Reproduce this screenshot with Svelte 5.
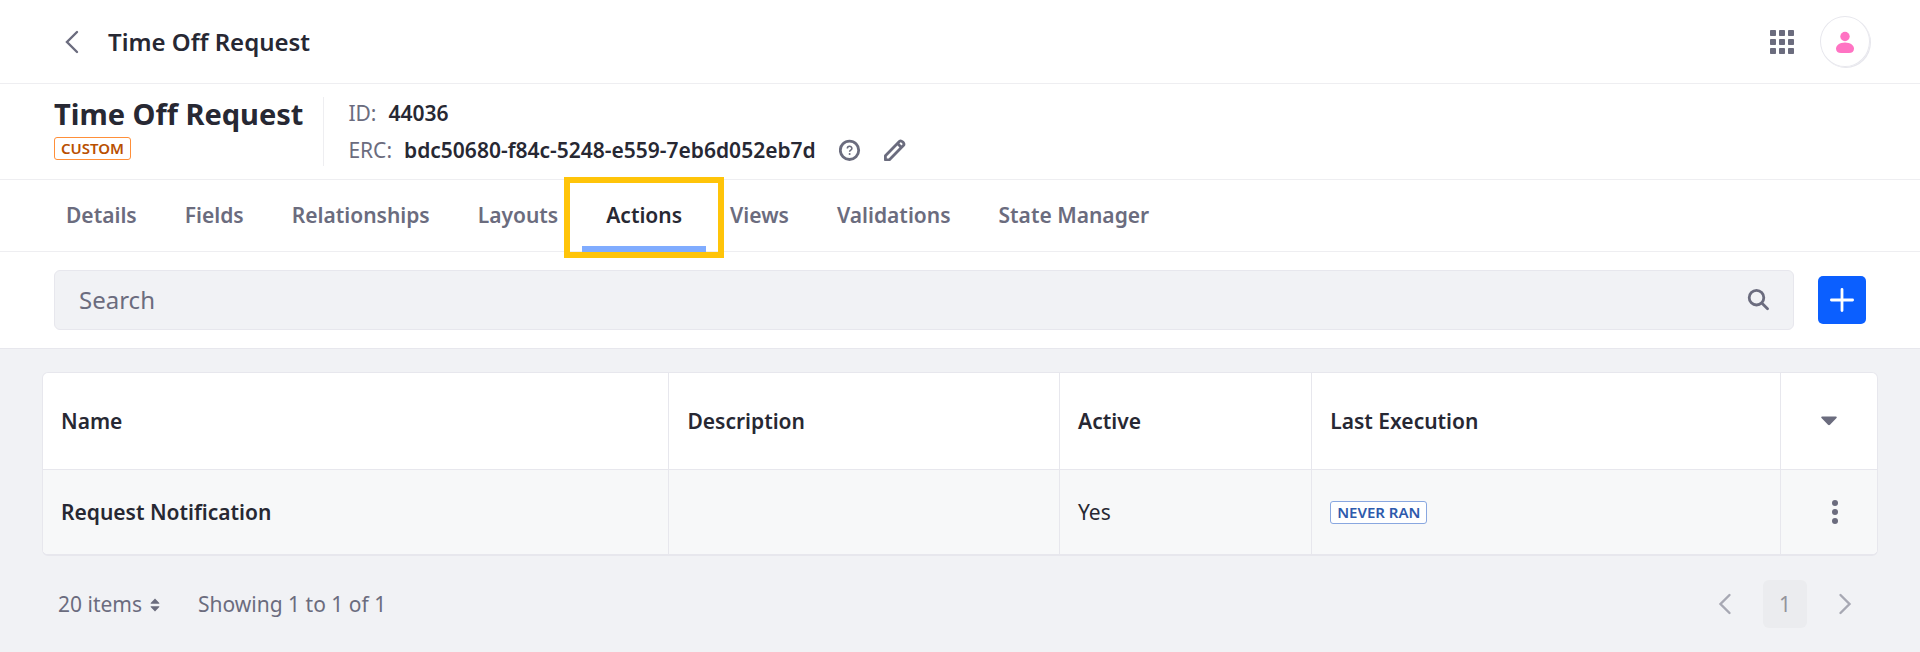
<script>
  const tabs = ['Details', 'Fields', 'Relationships', 'Layouts', 'Actions', 'Views', 'Validations', 'State Manager'];
  const rows = [{ name: 'Request Notification', description: '', active: 'Yes', status: 'Never ran' }];
  const cells = [0, 9, 18];
  let current = $state('Actions');
  let query = $state('');
</script>

<header class="topbar">
  <button class="icon-button" aria-label="Back">
    <svg width="24" height="24" viewBox="0 0 24 24"><path d="M17 2 7 12l10 10" class="line" /></svg>
  </button>
  <span class="page-name">Time Off Request</span>
  <div class="tools">
    <button class="icon-button" aria-label="Applications">
      <svg width="24" height="24" viewBox="0 0 24 24">
        {#each cells as y}{#each cells as x}<rect {x} {y} width="6" height="6" rx="0.8" fill="currentColor" />{/each}{/each}
      </svg>
    </button>
    <button class="avatar" aria-label="User profile">
      <svg width="24" height="24" viewBox="0 0 24 24" fill="#ff73c3">
        <circle cx="12" cy="6.500" r="4.700" />
        <path d="M12 12.500c5.200 0 9 2.800 9 6.100 0 3-2 4.500-5 4.500H8c-3 0-5-1.500-5-4.500 0-3.300 3.800-6.100 9-6.100z" />
      </svg>
    </button>
  </div>
</header>

<section class="summary">
  <div class="identity">
    <h1>Time Off Request</h1>
    <span class="badge custom">Custom</span>
  </div>
  <dl>
    <div><dt>ID:</dt><dd>44036</dd></div>
    <div>
      <dt>ERC:</dt><dd>bdc50680-f84c-5248-e559-7eb6d052eb7d</dd>
      <button class="icon-button help" aria-label="Help">
        <svg width="22" height="22" viewBox="0 0 22 22">
          <circle cx="10.500" cy="11.300" r="9.200" class="line heavy" />
          <path d="M8.300 9.600c0-3 4.600-2.900 4.600-.2 0 1.700-2.300 1.700-2.300 3.300" fill="none" stroke="currentColor" stroke-width="1.500" />
          <circle cx="10.600" cy="14.900" r="1" fill="currentColor" />
        </svg>
      </button>
      <button class="icon-button edit" aria-label="Edit">
        <svg width="22" height="22" viewBox="0 0 22 22">
          <path d="M1.400 20.800v-4.100L15.600 2.300c1.600-1.600 5.600 2.400 4 4L5.400 20.800zM13.600 4.600l3.800 3.800" class="line heavy" stroke-linejoin="round" />
        </svg>
      </button>
    </div>
  </dl>
</section>

<nav class="tabs">
  {#each tabs as tab}
    <button class="tab" class:active={tab === current} onclick={() => (current = tab)}>{tab}</button>
  {/each}
</nav>

<form class="toolbar" onsubmit={(e) => e.preventDefault()}>
  <div class="search">
    <input type="text" placeholder="Search" aria-label="Search" bind:value={query} />
    <button class="icon-button" aria-label="Submit search">
      <svg width="22" height="22" viewBox="0 0 22 22"><circle cx="9.500" cy="8.700" r="7.300" class="line heavy" /><path d="m15 14.200 5.500 5.500" class="line heavy" /></svg>
    </button>
  </div>
  <button type="button" class="add" aria-label="Add action">
    <svg width="24" height="24" viewBox="0 0 24 24"><path d="M12 1.400v21.200M1.400 12h21.200" class="line heavy" /></svg>
  </button>
</form>

<main>
  <table>
    <colgroup><col class="c-name" /><col class="c-description" /><col class="c-active" /><col class="c-execution" /><col class="c-menu" /></colgroup>
    <thead>
      <tr>
        <th>Name</th><th>Description</th><th>Active</th><th>Last Execution</th>
        <th class="menu">
          <button class="icon-button" aria-label="Choose columns">
            <svg width="16" height="10" viewBox="0 0 16 10"><path d="M1.200.5h13.600c1 0 1.300.9.700 1.500L9 8.800c-.6.600-1.400.6-2 0L.5 2C-.1 1.400.2.500 1.200.5z" fill="currentColor" /></svg>
          </button>
        </th>
      </tr>
    </thead>
    <tbody>
      {#each rows as row}
        <tr>
          <td class="name">{row.name}</td>
          <td>{row.description}</td>
          <td>{row.active}</td>
          <td><span class="badge info">{row.status}</span></td>
          <td class="menu kebab">
            <button class="icon-button" aria-label="Row actions">
              <svg width="24" height="24" viewBox="0 0 24 24" fill="currentColor"><circle cx="12" cy="3" r="3" /><circle cx="12" cy="12" r="3" /><circle cx="12" cy="21" r="3" /></svg>
            </button>
          </td>
        </tr>
      {/each}
    </tbody>
  </table>

  <footer>
    <button class="per-page">
      20 items
      <svg width="10" height="16" viewBox="0 0 10 16" fill="currentColor"><path d="M5 2.500 9.300 7q.5.700-.4.700H1.100Q.2 7.700.7 7zM5 15.500 9.300 11q.5-.7-.4-.7H1.100Q.2 10.300.7 11z" /></svg>
    </button>
    <span>Showing 1 to 1 of 1</span>
    <div class="pager">
      <button class="icon-button" aria-label="Previous page" disabled>
        <svg width="22" height="22" viewBox="0 0 22 22"><path d="m15.500 2-9 9 9 9" class="line" /></svg>
      </button>
      <button class="current" disabled>1</button>
      <button class="icon-button" aria-label="Next page" disabled>
        <svg width="22" height="22" viewBox="0 0 22 22"><path d="m6.500 2 9 9-9 9" class="line" /></svg>
      </button>
    </div>
  </footer>
</main>

<style>
  :global(body) {
    background: #f1f2f5;
    color: #272833;
    font-family: 'Noto Sans', sans-serif;
    font-size: 21px;
    line-height: 32px;
  }
  button, input {
    font: inherit;
    color: inherit;
    border: 0;
    padding: 0;
    background: none;
  }
  svg { display: block; flex: none; }
  .line { fill: none; stroke: currentColor; stroke-width: 2.4; stroke-linecap: round; }
  .heavy { stroke-width: 2.8; }
  .icon-button {
    display: flex;
    align-items: center;
    justify-content: center;
    color: #6b6c7e;
  }
  .topbar, .summary, .tabs, .toolbar {
    display: flex;
    align-items: center;
    background: #fff;
    border-bottom: 1px solid #eeeef1;
  }
  .topbar { padding: 16px 50px 16px 60px; }
  .page-name { margin-left: 24px; font-size: 24px; font-weight: 600; }
  .tools { display: flex; align-items: center; gap: 26px; margin-left: auto; }
  .avatar {
    display: flex;
    align-items: center;
    justify-content: center;
    width: 50px;
    height: 51px;
    border-radius: 50%;
    box-shadow: inset 0 0 0 1px #e7e7ed, 1px 1px 0 #e7e7ed;
  }

  .summary { padding: 13px 54px; }
  .identity { padding-right: 20px; border-right: 1px solid #eeeef1; height: 69px; }
  h1 { margin: 0; padding: 1px 0 7px; font-size: 29px; line-height: 32px; font-weight: 700; }
  .badge {
    display: block;
    width: max-content;
    box-sizing: border-box;
    padding: 0 6px;
    border: 1px solid;
    border-radius: 3px;
    background: #fff;
    font-size: 15px;
    line-height: 21px;
    font-weight: 600;
    text-transform: uppercase;
  }
  .custom { color: #b95000; border-color: #ff8f39; }
  .info { color: #2e5aac; border-color: #89a7e0; }
  dl { margin: 0 0 0 24px; display: grid; gap: 5px; }
  dl div { display: flex; align-items: center; }
  dt { color: #6b6c7e; }
  dd { margin: 0 0 0 12px; font-weight: 600; }
  .help { margin-left: 23px; }
  .edit { margin-left: 23px; }

  .tabs { padding: 0 42px; }
  .tab {
    position: relative;
    padding: 19px 24px 20px;
    color: #6b6c7e;
    font-weight: 600;
    white-space: nowrap;
  }
  .tab.active { color: #272833; }
  .tab.active::before {
    content: '';
    position: absolute;
    inset: auto 0 -1px;
    height: 6px;
    background: #80acff;
  }
  .tab.active::after {
    content: '';
    position: absolute;
    z-index: 1;
    inset: -3px -18px -7px;
    border: 6px solid #ffc409;
  }

  .toolbar { gap: 24px; padding: 18px 54px; border-color: #e7e7ed; }
  .search {
    flex: 1;
    display: flex;
    align-items: center;
    padding: 0 24px;
    background: #f1f2f5;
    border: 1px solid #e7e7ed;
    border-radius: 6px;
  }
  .search input { flex: 1; min-width: 0; height: 56px; padding-bottom: 2px; font-size: 24px; outline: 0; }
  .search input::placeholder { color: #6b6c7e; opacity: 1; }
  .add {
    display: flex;
    align-items: center;
    justify-content: center;
    width: 48px;
    height: 48px;
    border-radius: 5px;
    background: #0b5fff;
    color: #fff;
  }

  main { padding: 23px 42px; }
  table {
    width: 100%;
    table-layout: fixed;
    border-collapse: separate;
    border-spacing: 0;
    border: 1px solid #e7e7ed;
    border-bottom-width: 2px;
    border-radius: 6px;
    overflow: hidden;
    background: #fff;
  }
  .c-name { width: 34.1%; }
  .c-description { width: 21.3%; }
  .c-active { width: 13.75%; }
  .c-execution { width: 25.55%; }
  .c-menu { width: 5.3%; }
  th, td { padding: 0 18px; text-align: left; }
  th { height: 96px; font-weight: 600; border-bottom: 1px solid #e7e7ed; }
  td { height: 84px; background: #f7f8f9; }
  th + th, td + td { border-left: 1px solid #e7e7ed; }
  .name { font-weight: 600; }
  .menu { padding: 0; }
  .menu .icon-button { margin: auto; }
  .kebab { padding-left: 12px; }

  footer { display: flex; align-items: center; padding: 24px 22px 0 16px; color: #6b6c7e; }
  .per-page { display: flex; align-items: center; gap: 8px; margin-right: 38px; }
  .pager { display: flex; align-items: center; gap: 27px; margin-left: auto; }
  .pager .icon-button { color: #a7a8b3; }
  .current { width: 44px; height: 48px; border-radius: 6px; background: #ebecef; color: #93949c; }
</style>
